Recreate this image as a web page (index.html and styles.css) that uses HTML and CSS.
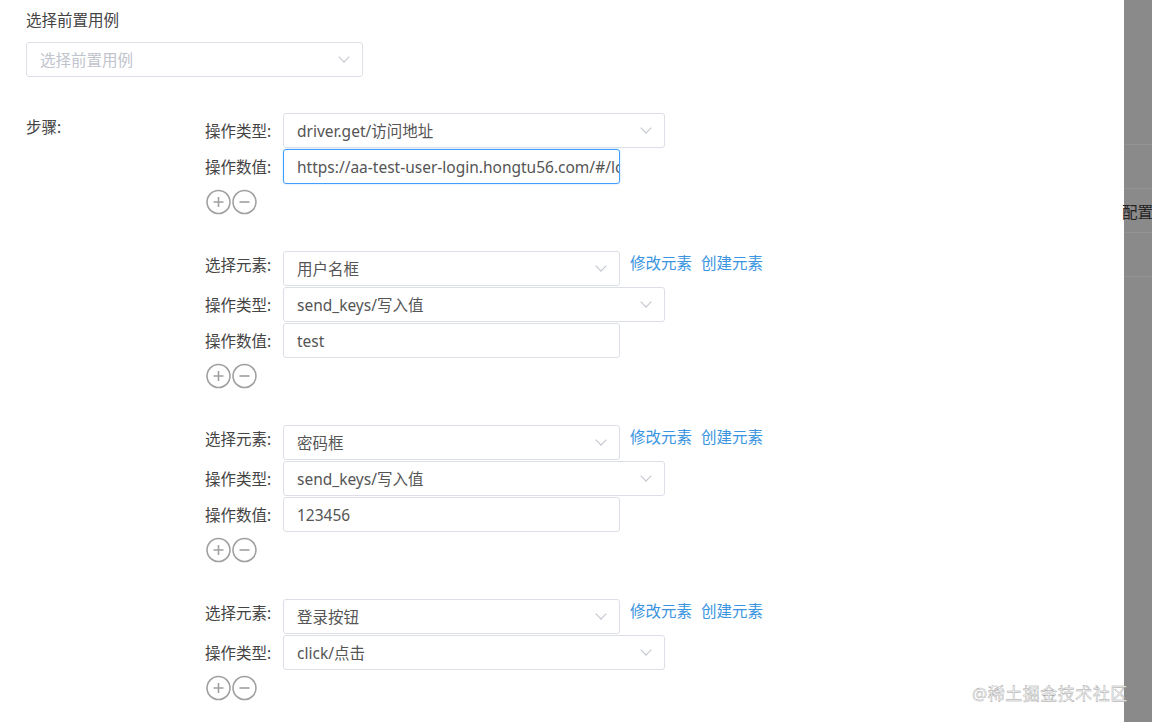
FILE: index.html
```html
<!DOCTYPE html>
<html lang="zh-CN">

<head>
    <meta charset="UTF-8">
    <title>用例步骤</title>
    <link rel="stylesheet" href="styles.css">
</head>

<body>
    <div class="page">
        <div class="drawer">
            <div class="field-title">选择前置用例</div>
            <div class="sel pre">
                <span class="ph">选择前置用例</span>
                <span class="arrow"></span>
            </div>

            <div class="steps">
                <div class="steps-label">步骤:</div>
                <div class="step-list">
                    <!-- step 1 -->
                    <div class="step">
                        <div class="row">
                            <span class="lbl">操作类型:</span>
                            <div class="sel wide"><span>driver.get/访问地址</span><span class="arrow"></span></div>
                        </div>
                        <div class="row">
                            <span class="lbl">操作数值:</span>
                            <div class="inp focus"><span>https://aa-test-user-login.hongtu56.com/#/login</span></div>
                        </div>
                        <div class="ops">
                            <svg width="27" height="26" viewBox="0 0 27 26"><circle cx="13.5" cy="13" r="11.5"/><path d="M8.5 13h10M13.5 8v10"/></svg>
                            <svg width="27" height="26" viewBox="0 0 27 26"><circle cx="13.5" cy="13" r="11.5"/><path d="M8.5 13h10"/></svg>
                        </div>
                    </div>
                    <!-- step 2 -->
                    <div class="step">
                        <div class="row">
                            <span class="lbl up">选择元素:</span>
                            <div class="sel"><span>用户名框</span><span class="arrow"></span></div>
                            <a class="link">修改元素</a>
                            <a class="link">创建元素</a>
                        </div>
                        <div class="row">
                            <span class="lbl">操作类型:</span>
                            <div class="sel wide"><span>send_keys/写入值</span><span class="arrow"></span></div>
                        </div>
                        <div class="row">
                            <span class="lbl">操作数值:</span>
                            <div class="inp"><span>test</span></div>
                        </div>
                        <div class="ops">
                            <svg width="27" height="26" viewBox="0 0 27 26"><circle cx="13.5" cy="13" r="11.5"/><path d="M8.5 13h10M13.5 8v10"/></svg>
                            <svg width="27" height="26" viewBox="0 0 27 26"><circle cx="13.5" cy="13" r="11.5"/><path d="M8.5 13h10"/></svg>
                        </div>
                    </div>
                    <!-- step 3 -->
                    <div class="step">
                        <div class="row">
                            <span class="lbl up">选择元素:</span>
                            <div class="sel"><span>密码框</span><span class="arrow"></span></div>
                            <a class="link">修改元素</a>
                            <a class="link">创建元素</a>
                        </div>
                        <div class="row">
                            <span class="lbl">操作类型:</span>
                            <div class="sel wide"><span>send_keys/写入值</span><span class="arrow"></span></div>
                        </div>
                        <div class="row">
                            <span class="lbl">操作数值:</span>
                            <div class="inp"><span>123456</span></div>
                        </div>
                        <div class="ops">
                            <svg width="27" height="26" viewBox="0 0 27 26"><circle cx="13.5" cy="13" r="11.5"/><path d="M8.5 13h10M13.5 8v10"/></svg>
                            <svg width="27" height="26" viewBox="0 0 27 26"><circle cx="13.5" cy="13" r="11.5"/><path d="M8.5 13h10"/></svg>
                        </div>
                    </div>
                    <!-- step 4 -->
                    <div class="step">
                        <div class="row">
                            <span class="lbl up">选择元素:</span>
                            <div class="sel"><span>登录按钮</span><span class="arrow"></span></div>
                            <a class="link">修改元素</a>
                            <a class="link">创建元素</a>
                        </div>
                        <div class="row">
                            <span class="lbl">操作类型:</span>
                            <div class="sel wide"><span>click/点击</span><span class="arrow"></span></div>
                        </div>
                        <div class="ops">
                            <svg width="27" height="26" viewBox="0 0 27 26"><circle cx="13.5" cy="13" r="11.5"/><path d="M8.5 13h10M13.5 8v10"/></svg>
                            <svg width="27" height="26" viewBox="0 0 27 26"><circle cx="13.5" cy="13" r="11.5"/><path d="M8.5 13h10"/></svg>
                        </div>
                    </div>
                </div>
            </div>
        </div>
        <div class="mask">
            <div class="mask-line"></div>
            <div class="mask-line"></div>
            <div class="mask-line"></div>
            <div class="mask-line"></div>
        </div>
        <div class="behind">配置</div>
        <div class="watermark">@稀土掘金技术社区</div>
    </div>
</body>

</html>
```

FILE: styles.css
```css
* {
    margin: 0;
    padding: 0;
    box-sizing: border-box;
}

body {
    font-family: "Microsoft YaHei", "Noto Sans", "Noto Sans CJK SC", sans-serif;
    font-size: 15.5px;
    color: #555;
    background: #fff;
}

.page {
    position: relative;
    display: flex;
    width: 1152px;
    height: 722px;
    overflow: hidden;
}

.drawer {
    width: 1124px;
    height: 100%;
    background: #fff;
    padding: 9px 0 0 26px;
}

.mask {
    flex: 1;
    background: #8a8a8a;
    padding-top: 144px;
}

.mask-line {
    height: 1px;
    background: #939393;
    margin-bottom: 43px;
}

.field-title {
    line-height: 22px;
    color: #444;
    margin-bottom: 11px;
}

.sel,
.inp {
    height: 35px;
    width: 337px;
    border: 1px solid #dcdfe6;
    border-radius: 3px;
    display: flex;
    align-items: center;
    justify-content: space-between;
    padding: 0 14px 0 13px;
    color: #555;
    white-space: nowrap;
    overflow: hidden;
}

.sel.wide {
    width: 382px;
}

.inp.focus {
    border-color: #409eff;
    padding-right: 0;
    box-shadow: 0 0 2px rgba(64, 158, 255, 0.4);
}

.ph {
    color: #c0c4cc;
}

.arrow {
    width: 8px;
    height: 8px;
    border-right: 1px solid #c0c4cc;
    border-bottom: 1px solid #c0c4cc;
    transform: rotate(45deg);
    margin-top: -5px;
    flex-shrink: 0;
}

.steps {
    display: flex;
    margin-top: 36px;
}

.steps-label {
    width: 179px;
    color: #444;
    line-height: 22px;
    padding-top: 3px;
}

.step {
    margin-bottom: 36px;
}

.row {
    display: flex;
    align-items: center;
    margin-bottom: 1px;
}

.lbl {
    width: 78px;
    color: #444;
}

.lbl.up {
    align-self: flex-start;
    padding-top: 2px;
}

.link {
    align-self: flex-start;
    color: #3b95e0;
    margin-left: 10px;
    line-height: 24px;
    margin-right: -1px;
}

.ops {
    display: flex;
    margin-top: 5px;
}

.ops svg {
    fill: none;
    stroke: #a0a0a0;
    stroke-width: 1.6;
    margin-right: -1px;
}

.behind {
    position: absolute;
    left: 1122px;
    top: 200px;
    color: #222;
    font-size: 15.5px;
    white-space: nowrap;
}

.watermark {
    position: absolute;
    left: 972px;
    top: 680px;
    font-size: 17px;
    color: #fafafa;
    -webkit-text-stroke: 0.4px #a0a0a0;
    letter-spacing: 0.5px;
}
```
